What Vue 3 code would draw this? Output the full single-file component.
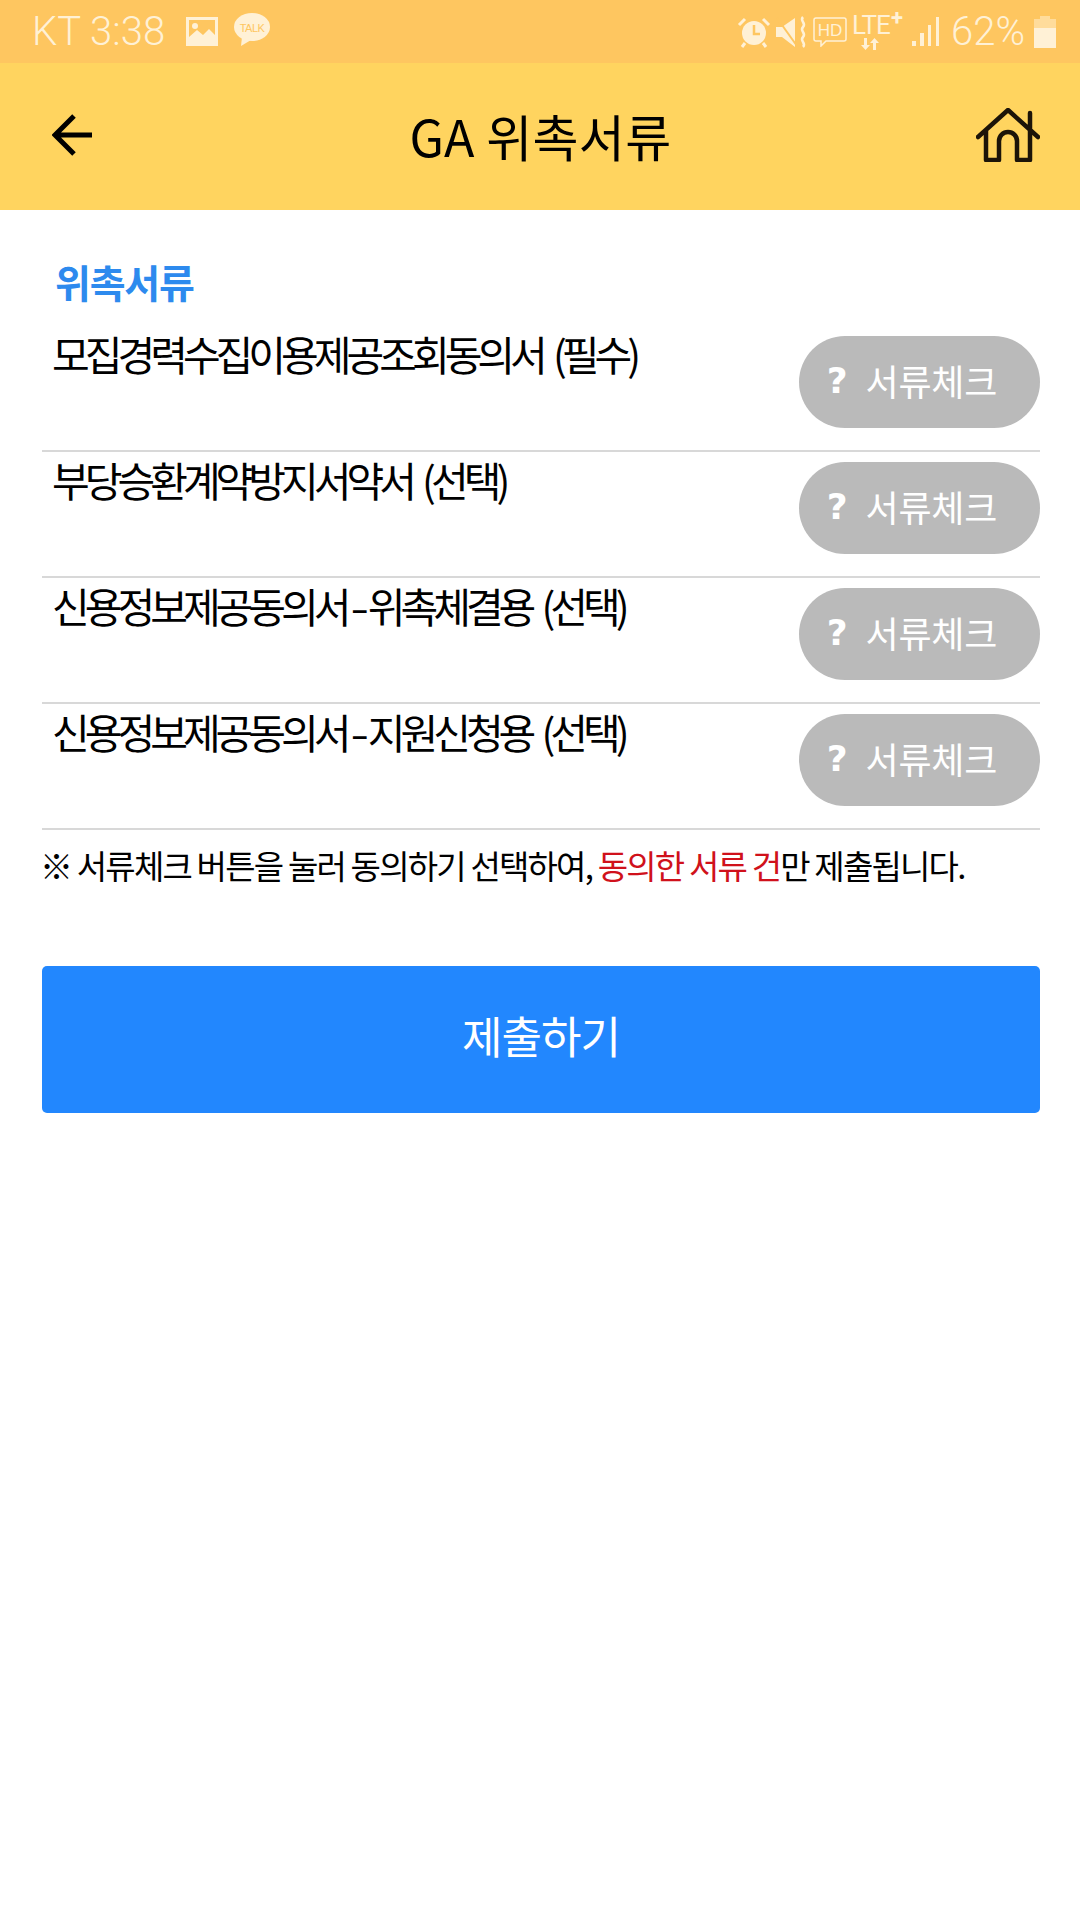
<script setup>
const items = [
  { a: '모집경력수집이용제공조회동의서 (필수)' },
  { a: '부당승환계약방지서약서 (선택)' },
  { a: '신용정보제공동의서', b: '위촉체결용 (선택)' },
  { a: '신용정보제공동의서', b: '지원신청용 (선택)' },
]
</script>

<template>
  <div class="page">
    <div class="status">
      <div class="status-left">
        <span class="status-text">KT 3:38</span>
        <svg class="ic-pic" width="32" height="30" viewBox="0 0 32 30">
          <path fill="#fff1d6" fill-rule="evenodd" d="M0 0h32v29H0z M3 3v17l8-7 6 5 6-6 6 6V3z" />
          <circle cx="9" cy="9" r="3" fill="#fff1d6" />
        </svg>
        <svg class="ic-talk" width="36" height="33" viewBox="0 0 36 33">
          <ellipse cx="18" cy="14" rx="18" ry="14" fill="#fff1d6" />
          <path fill="#fff1d6" d="M8 24l-1 9 10-6z" />
          <text x="18" y="18.500" text-anchor="middle" class="talk">TALK</text>
        </svg>
      </div>
      <div class="status-right">
        <svg width="34" height="32" viewBox="0 0 34 32">
          <circle cx="17" cy="17" r="12" fill="#fff1d6" />
          <path d="M17 9v9h6" fill="none" stroke="#fec660" stroke-width="2.500" />
          <path d="M2 9l6-6M32 9l-6-6M8 27l-3 4M26 27l3 4" stroke="#fff1d6" stroke-width="3" />
        </svg>
        <svg width="32" height="32" viewBox="0 0 32 32">
          <path fill="#fff1d6" d="M0 11h6l13-9v29L6 21H0z" />
          <path d="M1 2l20 28" stroke="#fec660" stroke-width="2" />
          <path d="M27 1c-4 4 4 6 0 10s4 6 0 10 4 6 0 10" fill="none" stroke="#fff1d6" stroke-width="2.500" />
        </svg>
        <svg width="34" height="30" viewBox="0 0 34 30">
          <path fill="none" stroke="#fff1d6" stroke-width="1.500" d="M3 1h28a2 2 0 0 1 2 2v19a2 2 0 0 1-2 2H13l-5 5v-5H3a2 2 0 0 1-2-2V3a2 2 0 0 1 2-2z" />
          <text x="17" y="19" text-anchor="middle" class="hd">HD</text>
        </svg>
        <div class="lte">
          <span class="lte-t">LTE</span><span class="lte-p">+</span>
          <svg class="lte-a" width="18" height="12" viewBox="0 0 18 12">
            <path fill="#fff1d6" d="M3 0h3v7h3l-4.500 5L0 7h3zM12 12h3V5h3l-4.500-5L9 5h3z" />
          </svg>
        </div>
        <svg class="sig" width="28" height="30" viewBox="0 0 28 30">
          <path fill="#fff1d6" d="M0 24h4v5H0zM8 16h4v13H8zM16 8h3v21h-3zM24 0h3v29h-3z" />
        </svg>
        <span class="status-text pct">62%</span>
        <svg width="22" height="32" viewBox="0 0 22 32">
          <path fill="#fff1d6" opacity="0.5" d="M6 0h10v3h6v10H0V3h6z" />
          <path fill="#fff1d6" d="M0 12h22v20H0z" />
        </svg>
      </div>
    </div>

    <header class="header">
      <svg width="40" height="42" viewBox="0 0 40 42">
        <path d="M3 21h37M22 2L3 21l19 19" fill="none" stroke="#000" stroke-width="5" />
      </svg>
      <h1 class="title">GA 위촉서류</h1>
      <svg width="64" height="54" viewBox="0 0 64 54">
        <path d="M2 29L32 2l30 27M54 5v22M10 23v29h13V33a9 9 0 0 1 18 0v19h13V23" fill="none" stroke="#1c1408" stroke-width="4.500" stroke-linecap="round" stroke-linejoin="round" />
      </svg>
    </header>

    <main class="content">
      <h2 class="section">위촉서류</h2>
      <ul class="list">
        <li v-for="item in items" :key="item.a + item.b" class="row">
          <span class="row-text">{{ item.a }}<span v-if="item.b" class="hy">-</span>{{ item.b }}</span>
          <span class="pill"><b class="q">?</b><span>서류체크</span></span>
        </li>
      </ul>
      <p class="note">※ 서류체크 버튼을 눌러 동의하기 선택하여, <span class="red">동의한 서류 건</span>만 제출됩니다.</p>
      <button class="submit">제출하기</button>
    </main>
  </div>
</template>

<style>
html, body { background: #fff; }
</style>

<style scoped>
.page {
  width: 1080px;
  height: 1920px;
  background: #fff;
  font-family: "Noto Sans CJK KR", "Noto Sans", sans-serif;
  overflow: hidden;
}
.status {
  height: 63px;
  background: #fec660;
  display: flex;
  justify-content: space-between;
  align-items: center;
  padding: 0 24px 0 32px;
  color: #fff1d6;
}
.status-left, .status-right { display: flex; align-items: center; }
.status-left { gap: 20px; }
.ic-pic { margin-left: 1px; }
.ic-talk { margin-left: -4px; margin-top: -4px; }
.status-right { gap: 5px; }
.status-text {
  font-family: Roboto, sans-serif;
  font-size: 40px;
  font-weight: 300;
  line-height: 48px;
}
.talk { font: 11px "Liberation Sans", sans-serif; fill: #fec660; letter-spacing: -0.500px; }
.hd { font: 17px "Liberation Sans", sans-serif; fill: #fff1d6; }
.lte { position: relative; width: 52px; height: 36px; font-family: Roboto, sans-serif; color: #fff1d6; }
.lte-t { position: absolute; left: 0; top: -2px; font-size: 26px; line-height: 26px; letter-spacing: -1px; }
.lte-p { position: absolute; left: 39px; top: -7px; font-size: 22px; line-height: 22px; font-weight: 700; }
.lte-a { position: absolute; left: 9px; top: 24px; }
.sig { margin-left: 3px; margin-right: 6px; }
.pct { margin-right: 4px; }

.header {
  height: 147px;
  background: #ffd45f;
  display: flex;
  justify-content: space-between;
  align-items: center;
  padding: 0 40px 4px 52px;
  box-sizing: border-box;
}
.title {
  margin: 0 0 0 13px;
  font-size: 50px;
  font-weight: 400;
  letter-spacing: 0.300px;
  line-height: 60px;
  color: #000;
}

.content { padding: 0 40px 0 42px; }
.section {
  margin: 0 0 20px;
  padding: 47px 0 0 13px;
  font-size: 39px;
  font-weight: 700;
  letter-spacing: -1.200px;
  line-height: 48px;
  color: #2d8aee;
}
.list { list-style: none; margin: 0; padding: 1px 0 0; }
.row {
  height: 126px;
  box-sizing: border-box;
  border-bottom: 2px solid #d8d8d8;
  display: flex;
  justify-content: space-between;
  align-items: flex-start;
  padding-top: 10px;
}
.row-text {
  font-size: 41px;
  line-height: 50px;
  letter-spacing: -5px;
  word-spacing: 6px;
  color: #000;
  margin: -8px 0 0 10px;
}
.hy {
  display: inline-block;
  padding: 0 6px;
  transform: scaleX(1.3);
}
.pill {
  width: 241px;
  height: 92px;
  border-radius: 46px;
  background: #bababa;
  color: #fff;
  font-size: 36px;
  display: flex;
  align-items: center;
  justify-content: center;
  gap: 18px;
  padding: 0 15px 4px 0;
  box-sizing: border-box;
  letter-spacing: -0.200px;
}
.q { font-family: "DejaVu Sans", sans-serif; font-weight: 700; font-size: 36px; }
.note {
  margin: 0 0 0 -2px;
  padding-top: 13px;
  font-size: 33px;
  line-height: 44px;
  letter-spacing: -1.800px;
  color: #000;
}
.red { color: #d0111b; }
.submit {
  display: block;
  margin-top: 79px;
  width: 100%;
  height: 147px;
  border: none;
  border-radius: 5px;
  background: #2287fe;
  color: #fff;
  font-family: inherit;
  font-size: 44px;
  letter-spacing: -1px;
  padding: 0 0 10px;
}
</style>
